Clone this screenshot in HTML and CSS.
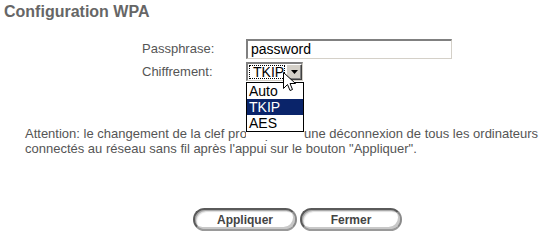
FILE: index.html
```html
<!DOCTYPE html>
<html>
<head>
<meta charset="utf-8">
<link rel="stylesheet" href="styles.css">
</head>
<body>
<h1 class="title">Configuration WPA</h1>
<div class="form">
  <div class="label">Passphrase:</div>
  <div class="field"><div class="textbox">password</div></div>
  <div class="label">Chiffrement:</div>
  <div class="field">
    <div class="select">
      <span class="sel-value"><span class="focus">TKIP</span></span>
      <span class="sel-btn"><svg width="7" height="4" viewBox="0 0 7 4"><path d="M0 0H7L3.5 4Z" fill="#000"/></svg></span>
    </div>
    <ul class="dropdown">
      <li>Auto</li>
      <li class="selected">TKIP</li>
      <li>AES</li>
    </ul>
    <svg class="cursor" width="13" height="21" viewBox="0 0 13 21"><path d="M0.5 0.5V16.5L4.5 12.5L7 18.5L9.5 17.5L7 11.5H12.5Z" fill="#fff" stroke="#000" stroke-width="1"/></svg>
  </div>
</div>
<p class="note">Attention: le changement de la clef provoquerait une déconnexion de tous les ordinateurs connectés au réseau sans fil après l'appui sur le bouton "Appliquer".</p>
<div class="buttons">
  <button class="btn btn-apply">Appliquer</button>
  <button class="btn btn-close">Fermer</button>
</div>
</body>
</html>
```
FILE: styles.css
```css
html, body {
  margin: 0;
  padding: 0;
  background: #fff;
  font-family: "Liberation Sans", Arial, sans-serif;
}
.title {
  margin: 0;
  padding: 3px 0 0 4px;
  font-size: 16px;
  line-height: 18px;
  font-weight: bold;
  color: #666;
}
.form {
  display: grid;
  grid-template-columns: 104px 206px;
  row-gap: 3px;
  margin: 18px 0 0 142px;
  font-size: 13px;
  color: #555;
}
.label {
  line-height: 20px;
}
.field {
  position: relative;
}
.textbox {
  box-sizing: border-box;
  height: 20px;
  border-top: 2px solid #808080;
  border-left: 2px solid #808080;
  border-bottom: 1px solid #d4d0c8;
  border-right: 1px solid #d4d0c8;
  padding: 0 3px;
  font-size: 14px;
  line-height: 17px;
  color: #000;
}
.select {
  box-sizing: border-box;
  display: flex;
  width: 57px;
  height: 19px;
  border-top: 2px solid #808080;
  border-left: 2px solid #808080;
  border-bottom: 1px solid #d4d0c8;
  border-right: 1px solid #d4d0c8;
  background: #fff;
  font-size: 14px;
  color: #000;
}
.sel-value {
  flex: 1;
  padding: 1px;
  display: flex;
}
.focus {
  flex: 1;
  border: 1px dotted #000;
  line-height: 13px;
  padding-left: 3px;
}
.sel-btn {
  box-sizing: border-box;
  width: 16px;
  background: #d4d0c8;
  border-top: 1px solid #fff;
  border-left: 1px solid #fff;
  border-right: 1px solid #404040;
  border-bottom: 1px solid #404040;
  box-shadow: inset -1px -1px 0 #808080;
  display: flex;
  align-items: center;
  justify-content: center;
}
.dropdown {
  position: absolute;
  left: 0;
  top: 20px;
  z-index: 2;
  margin: 0;
  padding: 0;
  list-style: none;
  box-sizing: border-box;
  width: 58px;
  border: 1px solid #000;
  background: #fff;
  box-shadow: 0 8px 0 #fff;
  font-size: 14px;
  color: #000;
}
.dropdown li {
  height: 16px;
  line-height: 16px;
  padding-left: 2px;
}
.dropdown li.selected {
  background: #0a246a;
  color: #fff;
}
.cursor {
  position: absolute;
  left: 37px;
  top: 10px;
  z-index: 3;
}
.note {
  margin: 44px 0 0 25px;
  width: 520px;
  font-size: 13px;
  line-height: 15px;
  color: #555;
}
.buttons {
  display: flex;
  justify-content: center;
  gap: 3px;
  margin: 52px 0 0 0;
  padding-left: 45px;
}
.btn {
  box-sizing: border-box;
  height: 23px;
  border-radius: 12px;
  border: 2px solid #5a5a5a;
  border-bottom-color: #9a9a9a;
  border-right-color: #8a8a8a;
  background: #fff;
  box-shadow: inset 1px 1px 0 #aaa, inset -2px -2px 0 #c8c8c8, inset 2px 2px 1px #ddd;
  font-family: "Liberation Sans", Arial, sans-serif;
  font-size: 12px;
  font-weight: bold;
  color: #444;
  padding: 0;
}
.btn-apply { width: 104px; }
.btn-close { width: 102px; }
```
